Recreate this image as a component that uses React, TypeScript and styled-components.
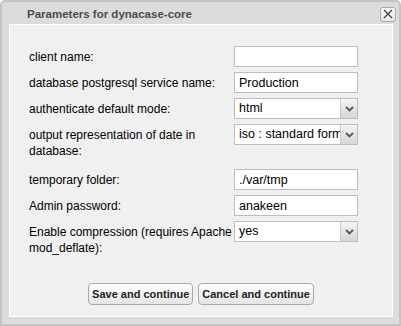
import React from "react";
import styled, { createGlobalStyle } from "styled-components";

const Global = createGlobalStyle`
  html, body { margin: 0; padding: 0; background: #ffffff; }
  body { font-family: "Liberation Sans", Arial, sans-serif; }
`;

const Dialog = styled.div`
  box-sizing: border-box;
  width: 401px;
  height: 326px;
  border: 2px solid #c4c4c4;
  border-radius: 5px 5px 0 0;
  background: #dcdcdc;
  display: flex;
  flex-direction: column;
`;

const TitleBar = styled.div`
  height: 22px;
  display: flex;
  align-items: center;
  justify-content: space-between;
  padding: 0 3px 0 25px;
`;

const Title = styled.span`
  font-family: "Liberation Sans", Arial, sans-serif;
  font-weight: bold;
  font-size: 11.5px;
  color: #4c4c4c;
  margin-top: 1px;
`;

const CloseButton = styled.button`
  box-sizing: border-box;
  width: 16px;
  height: 15px;
  padding: 0;
  border: 1px solid #a8a8a8;
  border-radius: 3px;
  background: linear-gradient(#fbfbfb, #e6e6e6);
  display: flex;
  align-items: center;
  justify-content: center;
  margin-top: 2px;
`;

const Content = styled.div`
  flex: 1;
  margin: 0 6px 7px 7px;
  border: 1px solid #ffffff;
  background: #f0f0f0;
  display: flex;
  flex-direction: column;
  padding: 21px 0 0 19px;
`;

const Form = styled.div`
  display: grid;
  grid-template-columns: 205px 124px;
  row-gap: 5px;
  align-items: start;
`;

const Label = styled.div<{ $tall?: boolean }>`
  font-size: 12px;
  color: #000;
  line-height: 16px;
  padding-top: 3px;
  min-height: ${(p) => (p.$tall ? "37px" : "auto")};
`;

const TextInput = styled.input`
  box-sizing: border-box;
  width: 124px;
  height: 21px;
  border: 1px solid #bdbdbd;
  background: #fff;
  font-family: "Liberation Sans", Arial, sans-serif;
  font-size: 12.5px;
  color: #000;
  padding: 0 4px;
  margin: 0;
  outline: none;
`;

const SelectBox = styled.div`
  box-sizing: border-box;
  width: 124px;
  height: 21px;
  border: 1px solid #bdbdbd;
  background: #fff;
  display: flex;
  align-items: stretch;
  overflow: hidden;
`;

const SelectValue = styled.span`
  flex: 1;
  min-width: 0;
  font-size: 12.5px;
  line-height: 19px;
  padding-left: 4px;
  white-space: nowrap;
  overflow: hidden;
`;

const SelectArrow = styled.span`
  flex: none;
  width: 16px;
  border-left: 1px solid #c8c8c8;
  background: linear-gradient(#f4f4f4, #d6d6d6);
  display: flex;
  align-items: center;
  justify-content: center;
`;

const Buttons = styled.div`
  display: flex;
  justify-content: center;
  gap: 5px;
  margin-top: auto;
  margin-bottom: 11px;
  padding-right: 19px;
`;

const Button = styled.button`
  box-sizing: border-box;
  height: 22px;
  padding: 0 3px;
  border: 1px solid #a9a9a9;
  border-radius: 4px;
  background: linear-gradient(#ffffff, #e4e4e4);
  font-family: "Liberation Sans", Arial, sans-serif;
  font-weight: bold;
  font-size: 11px;
  color: #222;
`;

const Arrow = () => (
  <svg width="9" height="6" viewBox="0 0 9 6">
    <path d="M1 1 L4.5 4.5 L8 1" stroke="#555" strokeWidth="1.8" fill="none" />
  </svg>
);

const Select = ({ value }: { value: string }) => (
  <SelectBox>
    <SelectValue>{value}</SelectValue>
    <SelectArrow>
      <Arrow />
    </SelectArrow>
  </SelectBox>
);

export default function App() {
  return (
    <>
      <Global />
      <Dialog>
        <TitleBar>
          <Title>Parameters for dynacase-core</Title>
          <CloseButton aria-label="close">
            <svg width="10" height="10" viewBox="0 0 10 10">
              <path d="M1 1 L9 9 M9 1 L1 9" stroke="#444" strokeWidth="1.3" />
            </svg>
          </CloseButton>
        </TitleBar>
        <Content>
          <Form>
            <Label>client name:</Label>
            <TextInput defaultValue="" />
            <Label>database postgresql service name:</Label>
            <TextInput defaultValue="Production" />
            <Label>authenticate default mode:</Label>
            <Select value="html" />
            <Label $tall>output representation of date in database:</Label>
            <Select value="iso : standard format" />
            <Label>temporary folder:</Label>
            <TextInput defaultValue="./var/tmp" />
            <Label>Admin password:</Label>
            <TextInput defaultValue="anakeen" />
            <Label $tall>Enable compression (requires Apache mod_deflate):</Label>
            <Select value="yes" />
          </Form>
          <Buttons>
            <Button>Save and continue</Button>
            <Button>Cancel and continue</Button>
          </Buttons>
        </Content>
      </Dialog>
    </>
  );
}
